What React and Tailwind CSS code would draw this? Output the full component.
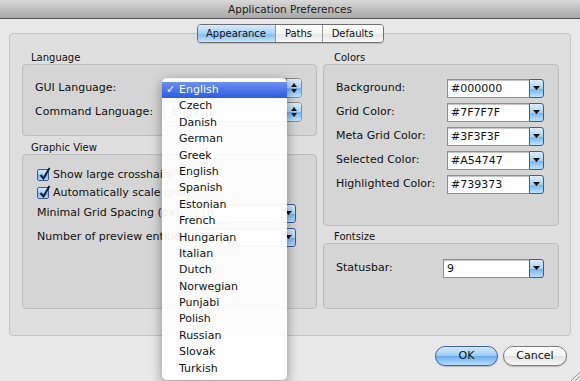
import React from "react";

const languages = [
  "Czech",
  "Danish",
  "German",
  "Greek",
  "English",
  "Spanish",
  "Estonian",
  "French",
  "Hungarian",
  "Italian",
  "Dutch",
  "Norwegian",
  "Punjabi",
  "Polish",
  "Russian",
  "Slovak",
  "Turkish",
];

const colors = [
  ["Background:", "#000000"],
  ["Grid Color:", "#7F7F7F"],
  ["Meta Grid Color:", "#3F3F3F"],
  ["Selected Color:", "#A54747"],
  ["Highlighted Color:", "#739373"],
];

function ComboArrow() {
  return (
    <div className="w-[15px] h-full rounded-r-[3px] border border-[#3a5c9c] bg-[linear-gradient(#dcedfc,#a9d2f6_50%,#74b2ec_52%,#bfe2fd)] flex items-center justify-center">
      <svg width="7" height="4" viewBox="0 0 7 4">
        <path d="M0 0h7L3.5 4z" fill="#111" />
      </svg>
    </div>
  );
}

function Combo({ value, width }) {
  return (
    <div className="flex h-[19px]">
      <div
        className={`${width} h-full bg-white border border-[#8f8f8f] border-r-0 shadow-[inset_0_1px_1px_rgba(0,0,0,0.25)] pl-[3px] text-[11px] leading-[17px] text-[#111]`}
      >
        {value}
      </div>
      <ComboArrow />
    </div>
  );
}

function Popup() {
  return (
    <div className="flex h-[20px] w-[138px] rounded-[4px] border border-[#8a8a8a] bg-[linear-gradient(#ffffff,#f1f1f1_50%,#e4e4e4_52%,#f6f6f6)] overflow-hidden">
      <div className="flex-1 pl-[7px] text-[11px] leading-[18px] text-[#111]">English</div>
      <div className="w-[15px] border-l border-[#4f72ae] bg-[linear-gradient(#dcedfc,#a9d2f6_50%,#74b2ec_52%,#bfe2fd)] flex flex-col items-center justify-center gap-[2px]">
        <svg width="6" height="4" viewBox="0 0 6 4">
          <path d="M3 0L6 4H0z" fill="#111" />
        </svg>
        <svg width="6" height="4" viewBox="0 0 6 4">
          <path d="M0 0h6L3 4z" fill="#111" />
        </svg>
      </div>
    </div>
  );
}

function Check({ label }) {
  return (
    <div className="flex items-center h-[16px] gap-[4px]">
      <div className="relative w-[12px] h-[12px] rounded-[2px] border border-[#3d5d94] bg-[linear-gradient(#d6ebfc,#9fcbf3_50%,#6eaeea_52%,#b8dcfb)]">
        <svg className="absolute left-[1px] -top-[3px]" width="12" height="13" viewBox="0 0 12 13">
          <path d="M1.5 8l3 3.5L10.5 1" stroke="#10203a" strokeWidth="2" fill="none" />
        </svg>
      </div>
      <span className="text-[11px] text-[#111] whitespace-nowrap">{label}</span>
    </div>
  );
}

function GroupLabel({ children, pad }) {
  return (
    <div className={`${pad} h-[12px] text-[10px] leading-[12px] text-[#111]`}>{children}</div>
  );
}

export default function App() {
  return (
    <div className="relative w-[580px] h-[381px] overflow-hidden bg-[#e8e8e8] font-['DejaVu_Sans',sans-serif] text-[#111]">
      {/* Title bar */}
      <div className="h-[19px] border-b border-[#555] bg-[linear-gradient(#d9d9d9,#a8a8a8)] text-center text-[10.5px] leading-[18px] text-[#222]">
        Application Preferences
      </div>

      <div className="px-[9px]">
        {/* Tabs */}
        <div className="relative z-10 mt-[5px] flex justify-center">
          <div className="flex h-[19px] rounded-[4px] border border-[#6f6f6f] overflow-hidden text-[10px] leading-[17px] shadow-[0_1px_1px_rgba(0,0,0,0.15)]">
            <div className="w-[77px] text-center bg-[linear-gradient(#d7eafb,#a9d1f5_50%,#84bcef_52%,#c4e3fc)]">
              Appearance
            </div>
            <div className="w-[47px] text-center border-l border-[#9a9a9a] bg-[linear-gradient(#ffffff,#f4f4f4_50%,#e6e6e6_52%,#f7f7f7)]">
              Paths
            </div>
            <div className="w-[61px] text-center border-l border-[#9a9a9a] bg-[linear-gradient(#ffffff,#f4f4f4_50%,#e6e6e6_52%,#f7f7f7)]">
              Defaults
            </div>
          </div>
        </div>

        {/* Tab panel */}
        <div className="-mt-[10px] h-[303px] rounded-[4px] border border-[#c4c4c4] bg-[#dfdfdf] pl-[12px] pt-[18px] flex gap-[6px]">
          {/* Left column */}
          <div className="w-[295px] flex flex-col">
            <GroupLabel pad="pl-[9px]">Language</GroupLabel>
            <div className="h-[72px] rounded-[4px] border border-[#bdbdbd] bg-[#d5d5d5] pt-[13px] pl-[12px] flex flex-col gap-[4px]">
              <div className="flex items-center h-[20px]">
                <span className="w-[129px] text-[11px]">GUI Language:</span>
                <Popup />
              </div>
              <div className="flex items-center h-[20px]">
                <span className="w-[129px] text-[11px]">Command Language:</span>
                <Popup />
              </div>
            </div>

            <div className="mt-[6px]">
              <GroupLabel pad="pl-[9px]">Graphic View</GroupLabel>
            </div>
            <div className="h-[155px] rounded-[4px] border border-[#bdbdbd] bg-[#d5d5d5] pt-[12px] pl-[14px] pr-[20px] flex flex-col">
              <Check label="Show large crosshairs" />
              <div className="mt-[2px]">
                <Check label="Automatically scale grid" />
              </div>
              <div className="mt-[2px] flex items-center justify-between h-[20px]">
                <span className="text-[11px] whitespace-nowrap">Minimal Grid Spacing (px):</span>
                <Combo value="10" width="w-[85px]" />
              </div>
              <div className="mt-[4px] flex items-center justify-between h-[20px]">
                <span className="text-[11px] whitespace-nowrap">Number of preview entities:</span>
                <Combo value="20" width="w-[85px]" />
              </div>
            </div>
          </div>

          {/* Right column */}
          <div className="w-[236px] flex flex-col">
            <GroupLabel pad="pl-[11px]">Colors</GroupLabel>
            <div className="h-[162px] rounded-[4px] border border-[#bdbdbd] bg-[#d5d5d5] pt-[13px] pl-[12px] flex flex-col gap-[4px]">
              {colors.map(([label, value]) => (
                <div key={label} className="flex items-center h-[20px]">
                  <span className="w-[111px] text-[11px] whitespace-nowrap">{label}</span>
                  <Combo value={value} width="w-[82px]" />
                </div>
              ))}
            </div>

            <div className="mt-[5px]">
              <GroupLabel pad="pl-[11px]">Fontsize</GroupLabel>
            </div>
            <div className="h-[66px] rounded-[4px] border border-[#bdbdbd] bg-[#d5d5d5] pt-[14px] pl-[12px]">
              <div className="flex items-center h-[20px]">
                <span className="w-[107px] text-[11px]">Statusbar:</span>
                <Combo value="9" width="w-[86px]" />
              </div>
            </div>
          </div>
        </div>

        {/* Buttons */}
        <div className="mt-[10px] flex justify-end gap-[5px] pr-[4px]">
          <button className="w-[63px] h-[20px] rounded-full border border-[#3e64a0] bg-[linear-gradient(#d4e9fc,#9ccbf4_50%,#6aacec_52%,#b7ddfc)] text-[11px] leading-[18px] shadow-[0_1px_1px_rgba(0,0,0,0.2)]">
            OK
          </button>
          <button className="w-[64px] h-[20px] rounded-full border border-[#7b7b7b] bg-[linear-gradient(#ffffff,#f3f3f3_50%,#e3e3e3_52%,#f8f8f8)] text-[11px] leading-[18px] shadow-[0_1px_1px_rgba(0,0,0,0.2)]">
            Cancel
          </button>
        </div>
      </div>

      {/* Open language menu */}
      <div className="absolute left-[162px] top-[78px] z-20 w-[125px] h-[302px] rounded-[5px] bg-white/[0.93] shadow-[0_3px_12px_rgba(0,0,0,0.4)] pt-[4px] text-[11px] text-[#111]">
        <div className="relative h-[16.4px] leading-[16.4px] pl-[17px] text-white bg-[linear-gradient(#6c8ff1,#2c5ce4)]">
          <span className="absolute left-[4px]">✓</span>
          English
        </div>
        {languages.map((l, i) => (
          <div key={i} className="h-[16.4px] leading-[16.4px] pl-[17px]">
            {l}
          </div>
        ))}
      </div>

      {/* Resize grip */}
      <svg className="absolute right-0 bottom-0" width="11" height="11" viewBox="0 0 11 11">
        <path d="M11 2L2 11M11 6L6 11M11 10L10 11" stroke="#9a9a9a" strokeWidth="1" />
      </svg>
    </div>
  );
}
